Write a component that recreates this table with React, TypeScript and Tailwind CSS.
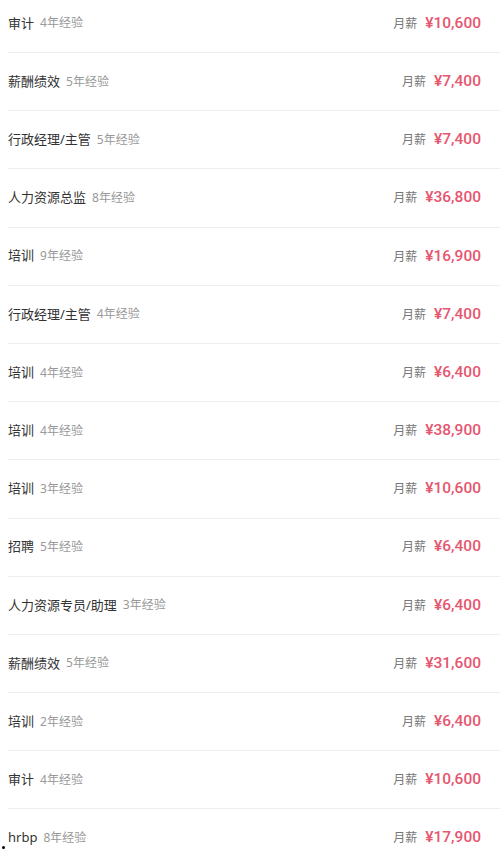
import React from "react";

const rows: [string, string, string][] = [
  ["审计", "4年经验", "10,600"],
  ["薪酬绩效", "5年经验", "7,400"],
  ["行政经理/主管", "5年经验", "7,400"],
  ["人力资源总监", "8年经验", "36,800"],
  ["培训", "9年经验", "16,900"],
  ["行政经理/主管", "4年经验", "7,400"],
  ["培训", "4年经验", "6,400"],
  ["培训", "4年经验", "38,900"],
  ["培训", "3年经验", "10,600"],
  ["招聘", "5年经验", "6,400"],
  ["人力资源专员/助理", "3年经验", "6,400"],
  ["薪酬绩效", "5年经验", "31,600"],
  ["培训", "2年经验", "6,400"],
  ["审计", "4年经验", "10,600"],
  ["hrbp", "8年经验", "17,900"],
];

export default function App() {
  return (
    <div
      className="relative h-[854px] w-[500px] overflow-hidden bg-white"
      style={{ fontFamily: '"Noto Sans", "Noto Sans CJK SC", sans-serif' }}
    >
      <div className="-mt-[5.2px] flex flex-col">
        {rows.map(([title, exp, salary], i) => (
          <div
            key={i}
            className="ml-[8px] flex h-[58.2px] shrink-0 items-center justify-between border-b border-[#efefef] pr-[19px]"
          >
            <div className="flex items-center gap-[6px]">
              <span className="text-[13px] text-[#333]">{title}</span>
              <span className="text-[12px] text-[#999]">{exp}</span>
            </div>
            <div className="flex items-baseline gap-[8px]">
              <span className="text-[12px] text-[#777]">月薪</span>
              <span
                className="text-[15.5px] font-medium text-[#e5566f]"
                style={{ fontFamily: "Roboto, sans-serif" }}
              >
                ¥{salary}
              </span>
            </div>
          </div>
        ))}
      </div>
      <div className="absolute left-[2px] top-[846px] h-[3px] w-[3px] rounded-full bg-black" />
    </div>
  );
}
